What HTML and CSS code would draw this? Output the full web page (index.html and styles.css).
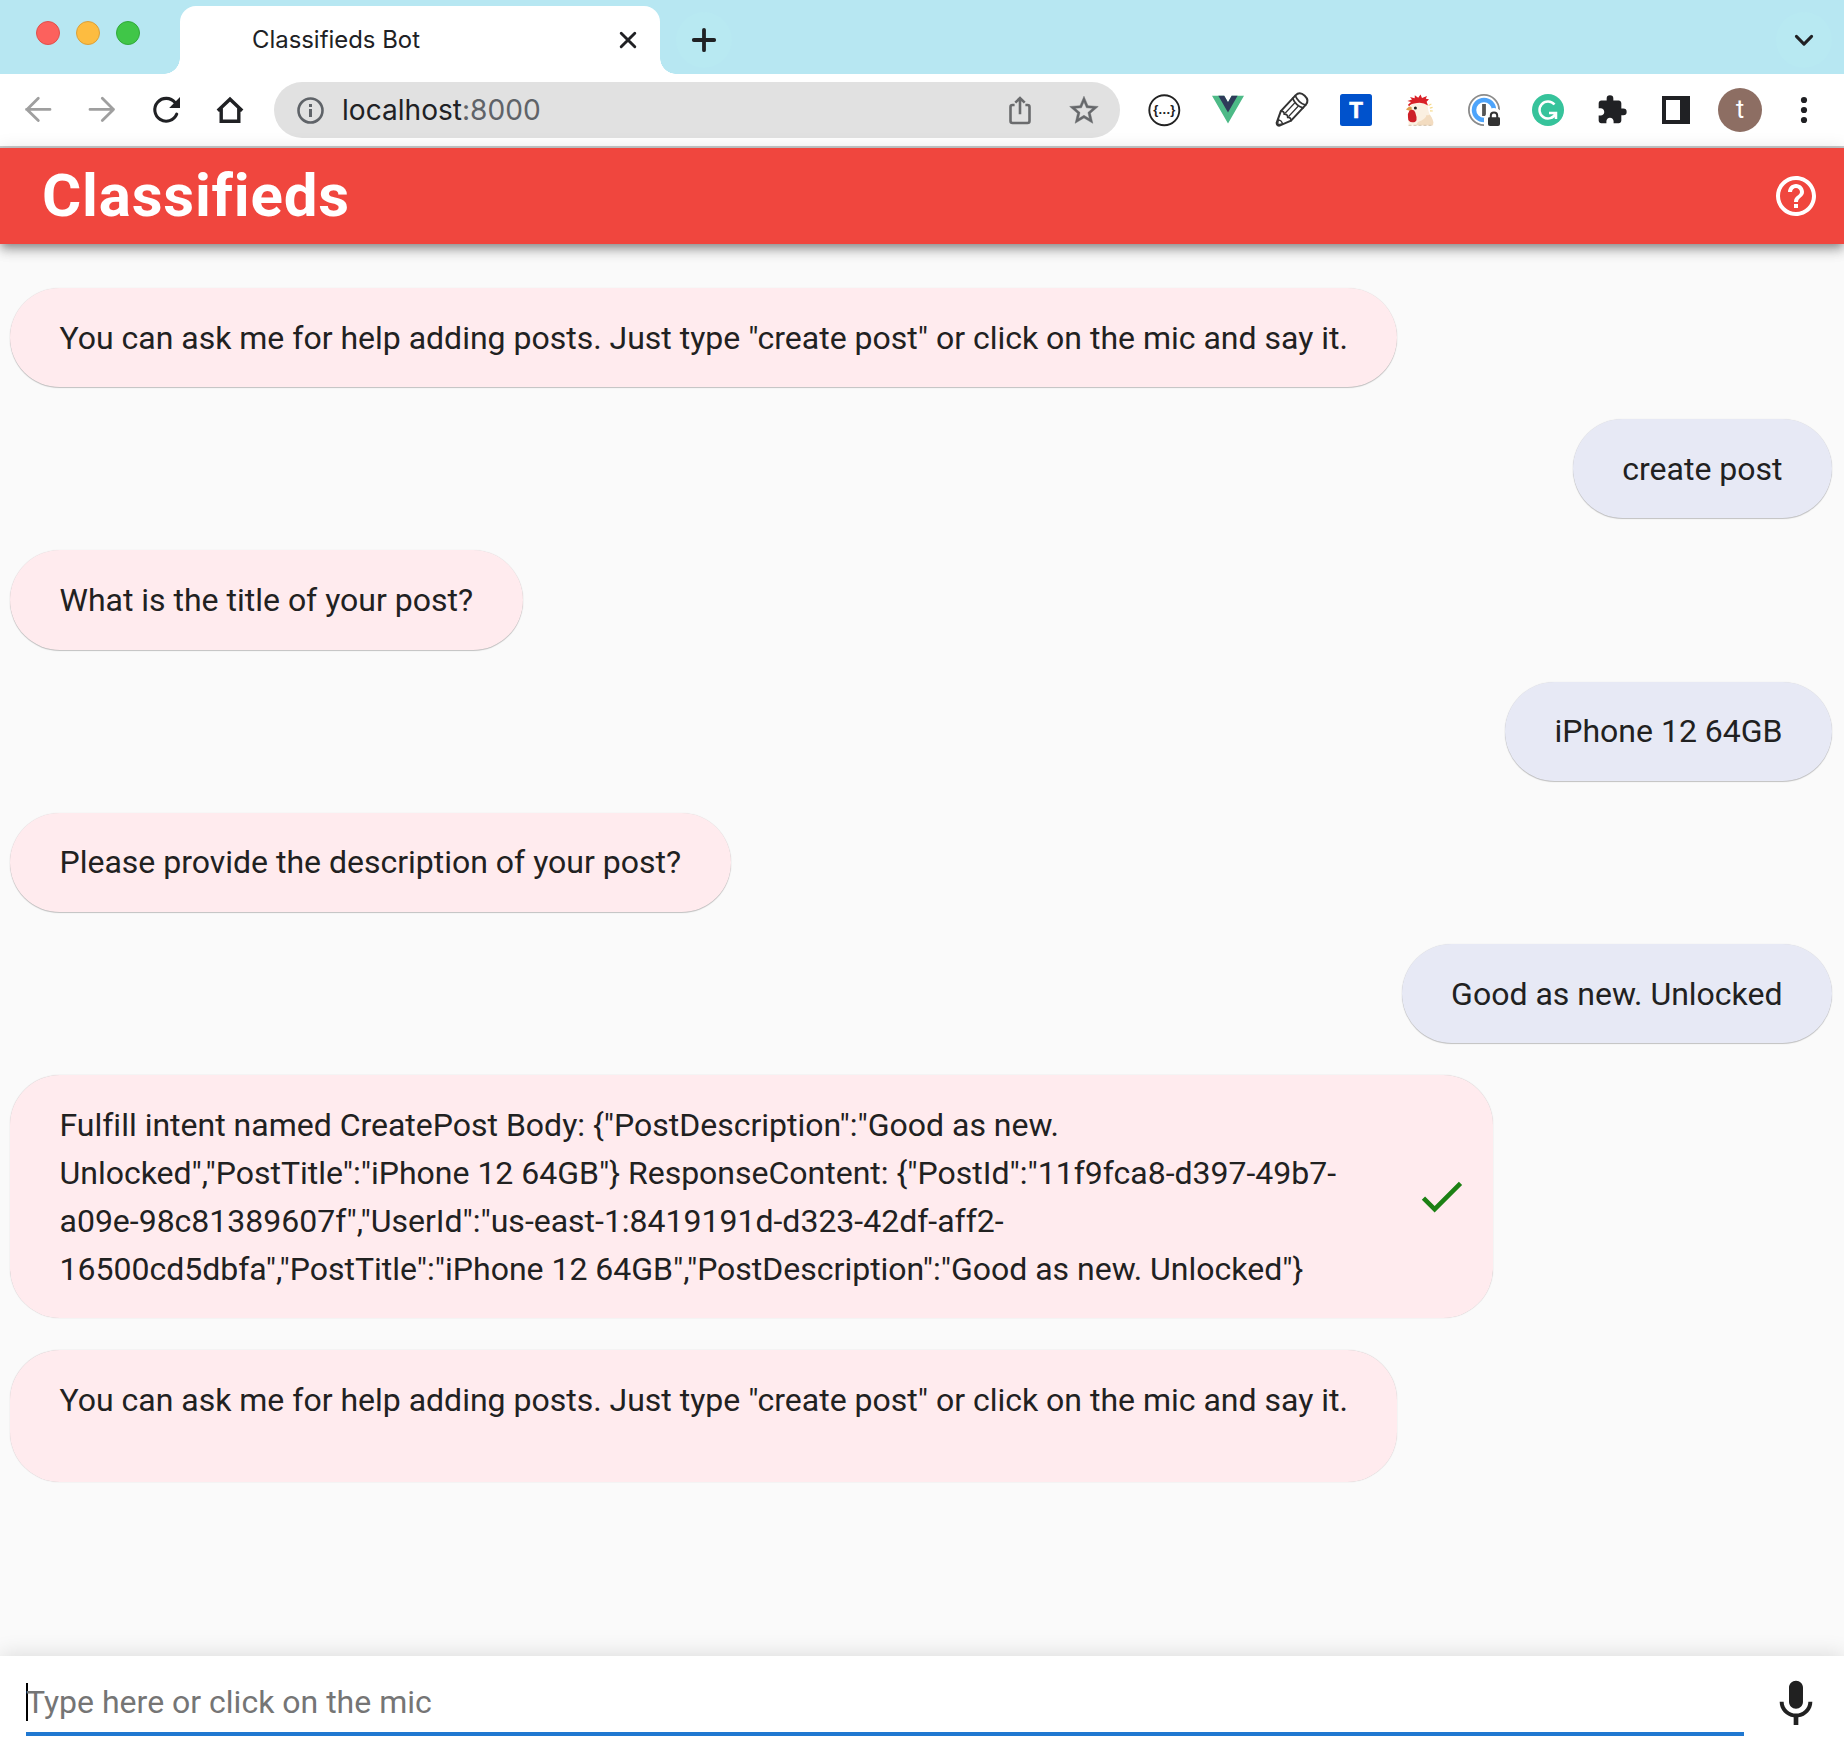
FILE: index.html
```html
<!DOCTYPE html>
<html lang="en">
<head>
<meta charset="utf-8">
<title>Classifieds Bot</title>
<link rel="stylesheet" href="styles.css">
</head>
<body>
<div class="window">
  <div class="tabstrip">
    <div class="lights">
      <span class="light light-close"></span>
      <span class="light light-min"></span>
      <span class="light light-max"></span>
    </div>
    <div class="tab">
      <span class="tab-title">Classifieds Bot</span>
      <svg class="tab-close" viewBox="-10 -10 20 20"><path d="M-6.8-6.8 6.8 6.8M6.8-6.8-6.8 6.8" fill="none" stroke="#202124" stroke-width="2.9" stroke-linecap="round"/></svg>
    </div>
    <svg class="new-tab" viewBox="-28 -28 56 56"><circle r="28" fill="#b8e9f2"/><path d="M-10.2 0H10.2M0-10.2V10.2" stroke="#202124" stroke-width="3.8" stroke-linecap="round"/></svg>
    <svg class="tab-search" viewBox="-28 -28 56 56"><circle r="28" fill="#b8e9f2"/><path d="M-7.6-3.6 0 4.1 7.6-3.6" fill="none" stroke="#202124" stroke-width="3" stroke-linecap="round" stroke-linejoin="round"/></svg>
  </div>

  <div class="toolbar">
    <svg class="tool" viewBox="-32 -28 64 56"><path d="M12-.6H-11.5M.3-11.8-11-.6.3 10.6" fill="none" stroke="#9f9f9f" stroke-width="2.8" stroke-linecap="round" stroke-linejoin="round"/></svg>
    <svg class="tool" viewBox="-32 -28 64 56"><path d="M-12-.6H11.5M.3-11.8 11.5-.6.3 10.6" fill="none" stroke="#9f9f9f" stroke-width="2.8" stroke-linecap="round" stroke-linejoin="round"/></svg>
    <svg class="tool" viewBox="-32 -28 64 56"><path d="M9-7.5A11.4 11.4 0 1 0 10.7 4.2" fill="none" stroke="#202124" stroke-width="3.1" stroke-linecap="round"/><path d="M14-13V-2H3.2z" fill="#202124"/></svg>
    <svg class="tool" viewBox="-32 -28 64 56"><path d="M-12.2.8 0-10.8 12.2.8M-8.8-1.5V11.2H8.8V-1.5" fill="none" stroke="#202124" stroke-width="3.4"/></svg>

    <div class="omnibox">
      <svg class="info" viewBox="-14 -14 28 28"><circle cx=".5" cy=".5" r="12" fill="none" stroke="#5f6368" stroke-width="2.6"/><path d="M-1-6h3v3h-3zM-1-1h3v8h-3z" fill="#5f6368"/></svg>
      <span class="url">localhost<span class="port">:8000</span></span>
      <svg class="tool" viewBox="-32 -28 64 56"><path d="M-5.4-5H-7.5a2 2 0 0 0-2 2V11a2 2 0 0 0 2 2H7.5a2 2 0 0 0 2-2V-3a2 2 0 0 0-2-2H5.4M0 4.2V-11.5M-4.7-7.4 0-12 4.7-7.4" fill="none" stroke="#6a6b6d" stroke-width="2.6"/></svg>
      <svg class="tool" viewBox="-32 -28 64 56"><path transform="translate(-17.2 -16.7) scale(1.43)" fill="#66686b" stroke="#66686b" stroke-width=".3" d="M22 9.24l-7.19-.62L12 2 9.19 8.63 2 9.24l5.46 4.73L5.82 21 12 17.27 18.18 21l-1.63-7.03L22 9.24zM12 15.4l-3.76 2.27 1-4.28-3.32-2.88 4.38-.38L12 6.1l1.71 4.04 4.38.38-3.32 2.88 1 4.28L12 15.4z"/></svg>
    </div>

    <div class="extensions">
      <svg class="tool" viewBox="-32 -28 64 56"><circle cx=".3" cy=".3" r="15" fill="#fff" stroke="#222" stroke-width="1.9"/><text class="glyph-braces" x=".5" y="4.4">{...}</text></svg>
      <svg class="tool" viewBox="-32 -28 64 56"><g transform="translate(-16 -14.2) scale(.125)"><path fill="#4dba87" d="M204.8 0H256L128 220.8 0 0h97.92L128 51.2 157.44 0z"/><path fill="#2f3b5a" d="M50.56 0 128 133.12 204.8 0h-47.36L128 51.2 97.92 0z"/></g></svg>
      <svg class="tool" viewBox="-32 -28 64 56"><g transform="translate(-.6 0) rotate(43)" fill="none" stroke="#333" stroke-width="2" stroke-linejoin="round" stroke-linecap="round"><path d="M-7 8V-13.5Q-6.8-19.5 0-19.5T7-13.5V8L2 19.5Q0 21.5-2 19.5z"/><path d="M-7-13.2Q0-10 7-13.2M-7-9.4Q0-6.2 7-9.4M-7 8Q-4.5 5.4-2.4 8 0 5.4 2.4 8 4.5 5.4 7 8" stroke-width="1.7"/><path d="M-2.4-7V6M2.4-7V6" stroke-width="1.2"/><path d="M-3 16Q0 14.4 3 16L0 20z" stroke-width="1.2"/></g></svg>
      <svg class="tool" viewBox="-32 -28 64 56"><rect x="-16" y="-16" width="32" height="32" rx="2.5" fill="#0052cc"/><text class="glyph-t" x="0" y="8">T</text></svg>
      <svg class="tool" viewBox="-32 -28 64 56"><path d="M-9.8-3Q-10 3-12 8.5L-11.2 15.5H13.2Q14.3 11 9.5 4.3 8 0 7.4-4.5 3-9-4-8.5-8-7.5-9.8-3z" fill="#fbf0e1"/><path d="M-2 12Q6 9 6.5 5 9 5.5 9.8 4.5 12.5 8 13.4 12L12.8 15.3H-4z" fill="#f3dcc0"/><path d="M-12-5.2-9-8-12.6-9-8-10.5-10-13-5.3-11.8-5.2-14.8-1.8-12.3.5-15.4 2-12 7-14 5.8-11.2 9-10.8 6.6-8.2 8-4.5Q3-8-3-7-9-6.5-11-3.6z" fill="#d92027"/><path d="M-14-.2Q-10-5.2-8.4-2.5L-8 1.2z" fill="#e2a04c"/><path d="M-10.5.5Q-6-1.8-4.8 2.2-3 7-3.5 10.2L-5 12Q-12 13.5-12 7.5-12.5 3-10.5.5z" fill="#ce2028"/><circle cx="-4.6" cy="-2" r="1.5" fill="#222"/><path d="M8.5-4.5 11.4-6M9.8-1.8 12.6-2.6M10 .8 12.8 1" stroke="#f6d98a" stroke-width="1.2"/><path d="M-11.5 15.3H13" stroke="#d3c2ad" stroke-width="1" stroke-dasharray="3 2"/></svg>
      <svg class="tool" viewBox="-32 -28 64 56"><circle r="15.1" fill="#fff" stroke="#8b8b8b" stroke-width="1.8"/><circle r="10" fill="#fff" stroke="#4da4fb" stroke-width="4.5"/><path d="M-1.9-6H1.9V6H-1.9z" fill="#555"/><path d="M0 17V8Q2 4 3 3 5-2 10-2 14-2 17 1V17z" fill="#fff"/><path d="M4 8.4q0-1.2 1.2-1.2h9.6q1.2 0 1.2 1.2V14q0 2-2 2H6q-2 0-2-2z" fill="#333"/><path d="M6.8 8V5.4Q6.8 2.6 10 2.6T13.2 5.4V8" fill="none" stroke="#333" stroke-width="2"/></svg>
      <svg class="tool" viewBox="-32 -28 64 56"><circle r="16" fill="#36c39b"/><path d="M6.5-5.5A8.5 8.5 0 1 0 7.7 3.6M1 2.9H8V9" fill="none" stroke="#fff" stroke-width="2.5"/></svg>
      <svg class="tool" viewBox="-32 -28 64 56"><path transform="translate(-16 -16.1) scale(1.333)" fill="#202124" d="M20.5 11H19V7c0-1.1-.9-2-2-2h-4V3.5a2.5 2.5 0 0 0-5 0V5H4c-1.1 0-1.99.9-1.99 2v3.8H3.5c1.49 0 2.7 1.21 2.7 2.7s-1.21 2.7-2.7 2.7H2V20c0 1.1.9 2 2 2h3.8v-1.5c0-1.49 1.21-2.7 2.7-2.7s2.7 1.21 2.7 2.7V22H17c1.1 0 2-.9 2-2v-4h1.5a2.5 2.5 0 0 0 0-5z"/></svg>
      <svg class="tool" viewBox="-32 -28 64 56"><path fill="#202124" fill-rule="evenodd" d="M-14-14H14V14H-14zM-10-10V10H4V-10z"/></svg>
      <div class="tool"><span class="avatar">t</span></div>
      <svg class="tool" viewBox="-32 -28 64 56"><g fill="#202124"><circle cy="-10" r="3.1"/><circle r="3.1"/><circle cy="10" r="3.1"/></g></svg>
    </div>
  </div>

  <header class="appbar">
    <h1 class="brand">Classifieds</h1>
    <svg class="help" viewBox="0 0 24 24"><path fill="#fff" d="M11 18h2v-2h-2v2zm1-16C6.48 2 2 6.48 2 12s4.48 10 10 10 10-4.48 10-10S17.52 2 12 2zm0 18c-4.41 0-8-3.59-8-8s3.59-8 8-8 8 3.59 8 8-3.59 8-8 8zm0-14c-2.21 0-4 1.79-4 4h2c0-1.1.9-2 2-2s2 .9 2 2c0 2-3 1.75-3 5h2c0-2.25 3-2.5 3-5 0-2.21-1.79-4-4-4z"/></svg>
  </header>

  <main class="chat">
    <div class="bubble bot raised">You can ask me for help adding posts. Just type "create post" or click on the mic and say it.</div>
    <div class="bubble human raised">create post</div>
    <div class="bubble bot raised">What is the title of your post?</div>
    <div class="bubble human raised">iPhone 12 64GB</div>
    <div class="bubble bot raised">Please provide the description of your post?</div>
    <div class="bubble human raised">Good as new. Unlocked</div>
    <div class="bubble bot result">
      <p class="result-text">Fulfill intent named CreatePost Body: {"PostDescription":"Good as new.<br>Unlocked","PostTitle":"iPhone 12 64GB"} ResponseContent: {"PostId":"11f9fca8-d397-49b7-<br>a09e-98c81389607f","UserId":"us-east-1:8419191d-d323-42df-aff2-<br>16500cd5dbfa","PostTitle":"iPhone 12 64GB","PostDescription":"Good as new. Unlocked"}</p>
      <svg class="check" viewBox="0 0 24 24"><path fill="#1c8014" d="M9 16.17L4.83 12l-1.42 1.41L9 19 21 7l-1.41-1.41z"/></svg>
    </div>
    <div class="bubble bot last">You can ask me for help adding posts. Just type "create post" or click on the mic and say it.</div>
  </main>

  <footer class="composer">
    <div class="field"><span class="placeholder">Type here or click on the mic</span></div>
    <svg class="mic" viewBox="0 0 24 24"><path fill="#212121" d="M12 14c1.66 0 2.99-1.34 2.99-3L15 5c0-1.66-1.34-3-3-3S9 3.34 9 5v6c0 1.66 1.34 3 3 3zm5.3-3c0 3-2.54 5.1-5.3 5.1S6.7 14 6.7 11H5c0 3.41 2.72 6.23 6 6.72V21h2v-3.28c3.28-.48 6-3.3 6-6.72h-1.7z"/></svg>
  </footer>
</div>
</body>
</html>
```
FILE: styles.css
```css
* { box-sizing: border-box; }
body { margin: 0; font-family: Roboto, "Liberation Sans", sans-serif; color: #212121; }
svg { display: block; flex: none; }

.window { display: flex; flex-direction: column; width: 1844px; height: 1742px; overflow: hidden; background: #fafafa; }

/* browser chrome */
.tabstrip { flex: none; display: flex; height: 74px; padding-top: 6px; background: #b7e7f2; }
.lights { display: flex; gap: 16px; width: 180px; padding: 15px 0 0 36px; }
.light { width: 24px; height: 24px; border-radius: 50%; border: 1px solid; }
.light-close { background: #fc615d; border-color: #e0504c; }
.light-min { background: #fdbc40; border-color: #dba03a; }
.light-max { background: #40c648; border-color: #31a93b; }
.tab { position: relative; display: flex; align-items: center; justify-content: space-between; width: 480px; height: 68px; padding: 0 22px 0 72px; background: #fff; border-radius: 16px 16px 0 0; }
.tab::before, .tab::after { content: ""; position: absolute; bottom: 0; width: 16px; height: 16px; }
.tab::before { left: -16px; background: radial-gradient(circle at 0 0, transparent 15.5px, #fff 16px); }
.tab::after { right: -16px; background: radial-gradient(circle at 100% 0, transparent 15.5px, #fff 16px); }
.tab-title { font: 400 23.9px/32px Inter, sans-serif; color: #202124; }
.tab-close { width: 20px; height: 20px; }
.new-tab, .tab-search { width: 56px; height: 56px; margin-top: 6px; }
.new-tab { margin-left: 16px; }
.tab-search { margin-left: auto; margin-right: 12px; }

.toolbar { flex: none; display: flex; align-items: center; height: 74px; padding-left: 6px; background: #fff; border-bottom: 2px solid #c8cacb; }
.tool { display: flex; align-items: center; justify-content: center; flex: none; width: 64px; height: 56px; }
.omnibox { display: flex; align-items: center; width: 846px; height: 56px; margin-left: 12px; padding: 0 4px 0 22px; border-radius: 28px; background: #e1e1e1; }
.info { width: 28px; height: 28px; }
.url { flex: 1; margin-left: 18px; font: 400 28.1px/40px Inter, sans-serif; color: #202124; }
.port { color: #5f6368; }
.extensions { display: flex; margin-left: 12px; }
.glyph-braces { font: 700 13px "Liberation Sans", sans-serif; letter-spacing: .3px; text-anchor: middle; fill: #222; }
.glyph-t { font: 700 22px Inter, sans-serif; text-anchor: middle; fill: #fff; stroke: #fff; stroke-width: .6px; }
.avatar { width: 44px; height: 44px; border-radius: 50%; background: #8d6e63; color: #fff; font: 400 25px/43px Roboto, sans-serif; text-align: center; }

/* application */
.appbar { position: relative; flex: none; display: flex; align-items: center; justify-content: space-between; height: 96px; padding: 0 24px 0 42px; background: #f0463e; box-shadow: 0 4px 8px -2px rgba(0,0,0,.3), 0 8px 10px rgba(0,0,0,.16), 0 2px 18px rgba(0,0,0,.12); }
.brand { margin: 0; font-size: 60px; line-height: 64px; font-weight: 700; letter-spacing: .8px; color: #fff; }
.help { width: 48px; height: 48px; }

.chat { flex: 1; display: flex; flex-direction: column; align-items: flex-start; gap: 32px; padding: 44px 12px 0 10px; font-size: 32px; line-height: 48px; }
.bubble { flex: none; padding: 25.6px 49.5px; border-radius: 50px; white-space: nowrap; box-shadow: 0 0 1px rgba(0,0,0,.25); }
.bot { background: #ffebee; letter-spacing: -.005px; }
.human { align-self: flex-end; background: #e7e9f5; }
.raised { box-shadow: 0 1px 1px rgba(0,0,0,.22), 0 0 1px rgba(0,0,0,.15); }
.result { display: flex; align-items: center; justify-content: space-between; width: 1483.4px; padding-right: 24.6px; }
.result-text { margin: 0; }
.check { width: 55px; height: 55px; }
.last { padding-bottom: 58.1px; }

.composer { position: relative; flex: none; display: flex; justify-content: space-between; height: 86px; padding: 0 20px 6px 26px; background: #fff; box-shadow: 0 -2px 20px rgba(0,0,0,.12); }
.field { width: 1718px; padding-top: 27px; border-bottom: 4px solid #1f78d1; }
.placeholder { display: block; height: 38px; font-size: 32px; line-height: 38px; color: #757575; box-shadow: inset 2px 0 #000; }
.mic { width: 56px; height: 56px; margin-top: 20px; }
```
